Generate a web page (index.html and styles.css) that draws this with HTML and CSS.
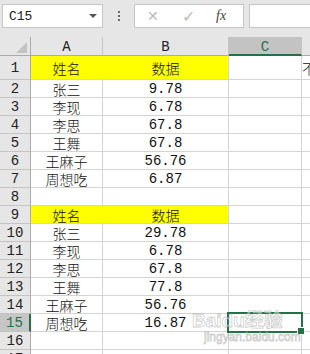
FILE: index.html
```html
<!DOCTYPE html>
<html lang="zh">
<head>
  <meta charset="UTF-8" />
  <title>Sheet</title>
  <link rel="stylesheet" href="styles.css">
</head>
<body>

  <div class="toolbar">
    <div class="name-box">
      <span>C15</span>
      <span class="caret"></span>
    </div>
    <div class="dots"><i></i><i></i><i></i></div>
    <div class="fx-buttons">
      <span class="btn-x">✕</span>
      <span class="btn-ok">✓</span>
      <span class="btn-fx">fx</span>
    </div>
    <div class="formula-input"></div>
  </div>

  <div class="sheet">
    <div class="cell corner"><span class="tri"></span></div>
    <div class="cell colhead">A</div>
    <div class="cell colhead">B</div>
    <div class="cell colhead active">C</div>
    <div class="cell colhead last"></div>

    <div class="cell rowhead tall">1</div>
    <div class="cell tall yellow first">姓名</div>
    <div class="cell tall yellow">数据</div>
    <div class="cell tall"></div>
    <div class="cell tall d-text">不</div>

    <div class="cell rowhead">2</div><div class="cell cn">张三</div><div class="cell num">9.78</div><div class="cell"></div><div class="cell"></div>
    <div class="cell rowhead">3</div><div class="cell cn">李现</div><div class="cell num">6.78</div><div class="cell"></div><div class="cell"></div>
    <div class="cell rowhead">4</div><div class="cell cn">李思</div><div class="cell num">67.8</div><div class="cell"></div><div class="cell"></div>
    <div class="cell rowhead">5</div><div class="cell cn">王舞</div><div class="cell num">67.8</div><div class="cell"></div><div class="cell"></div>
    <div class="cell rowhead">6</div><div class="cell cn">王麻子</div><div class="cell num">56.76</div><div class="cell"></div><div class="cell"></div>
    <div class="cell rowhead">7</div><div class="cell cn">周想吃</div><div class="cell num">6.87</div><div class="cell"></div><div class="cell"></div>
    <div class="cell rowhead">8</div><div class="cell"></div><div class="cell"></div><div class="cell"></div><div class="cell"></div>

    <div class="cell rowhead">9</div><div class="cell yellow first">姓名</div><div class="cell yellow">数据</div><div class="cell"></div><div class="cell"></div>
    <div class="cell rowhead">10</div><div class="cell cn">张三</div><div class="cell num">29.78</div><div class="cell"></div><div class="cell"></div>
    <div class="cell rowhead">11</div><div class="cell cn">李现</div><div class="cell num">6.78</div><div class="cell"></div><div class="cell"></div>
    <div class="cell rowhead">12</div><div class="cell cn">李思</div><div class="cell num">67.8</div><div class="cell"></div><div class="cell"></div>
    <div class="cell rowhead">13</div><div class="cell cn">王舞</div><div class="cell num">77.8</div><div class="cell"></div><div class="cell"></div>
    <div class="cell rowhead">14</div><div class="cell cn">王麻子</div><div class="cell num">56.76</div><div class="cell"></div><div class="cell"></div>
    <div class="cell rowhead active">15</div><div class="cell cn">周想吃</div><div class="cell num">16.87</div>
    <div class="cell selected"><span class="sel-box"><span class="handle"></span></span></div><div class="cell"></div>
    <div class="cell rowhead">16</div><div class="cell"></div><div class="cell"></div><div class="cell"></div><div class="cell"></div>
    <div class="cell rowhead">17</div><div class="cell"></div><div class="cell"></div><div class="cell"></div><div class="cell"></div>
  </div>

  <div class="watermark">
    <div class="wm-logo">Bai<span class="paw">du</span>经验</div>
    <div class="wm-url">jingyan.baidu.com</div>
  </div>

</body>
</html>
```

FILE: styles.css
```css
body {
  margin: 0;
  background: #fff;
  overflow: hidden;
  position: relative;
  font-family: "Liberation Mono", "Noto Sans CJK SC", monospace;
}
.toolbar {
  height: 37px;
  background: #e6e6e6;
  display: flex;
  align-items: flex-start;
  padding-top: 4px;
  box-sizing: border-box;
}
.name-box {
  width: 101px;
  height: 24px;
  margin-left: 2px;
  background: #fff;
  border: 1px solid #c6c6c6;
  box-sizing: border-box;
  display: flex;
  align-items: center;
  justify-content: space-between;
  padding: 0 5px 0 6px;
  font-size: 13px;
  color: #222;
}
.caret {
  width: 0;
  height: 0;
  border-left: 4px solid transparent;
  border-right: 4px solid transparent;
  border-top: 4px solid #555;
}
.dots {
  width: 31px;
  height: 24px;
  display: flex;
  flex-direction: column;
  align-items: center;
  justify-content: center;
  gap: 2px;
}
.dots i {
  width: 2px;
  height: 2px;
  background: #6a6a6a;
}
.fx-buttons {
  width: 110px;
  height: 24px;
  background: #fff;
  border: 1px solid #c6c6c6;
  box-sizing: border-box;
  display: flex;
  align-items: center;
  font-family: "Liberation Sans", sans-serif;
}
.btn-x {
  color: #bbb;
  font-size: 14px;
  margin-left: 12px;
}
.btn-ok {
  color: #bbb;
  font-size: 16px;
  margin-left: 23px;
}
.btn-fx {
  font-family: "Liberation Serif", serif;
  font-style: italic;
  font-size: 14px;
  color: #444;
  margin-left: 21px;
}
.formula-input {
  flex: 1;
  height: 24px;
  margin-left: 5px;
  background: #fff;
  border: 1px solid #c6c6c6;
  border-right: none;
  box-sizing: border-box;
}
.sheet {
  display: grid;
  grid-template-columns: 31px 72px 126px 73px 1fr;
  grid-auto-rows: 18px;
  grid-template-rows: 19px 24px;
}
.cell {
  box-sizing: border-box;
  border-right: 1px solid #d4d4d4;
  border-bottom: 1px solid #d4d4d4;
  display: flex;
  align-items: center;
  justify-content: center;
  font-size: 14px;
  line-height: 16px;
  color: #111;
  white-space: nowrap;
  overflow: hidden;
}
.corner {
  background: #e6e6e6;
  border-right: 1px solid #ababab;
  border-bottom: 1px solid #ababab;
  position: relative;
}
.tri {
  position: absolute;
  right: 3px;
  bottom: 2px;
  width: 0;
  height: 0;
  border-left: 11px solid transparent;
  border-bottom: 11px solid #c3c3c3;
}
.colhead {
  background: #e6e6e6;
  border-right: 1px solid #c4c4c4;
  border-bottom: 1px solid #ababab;
  color: #222;
  padding-top: 2px;
}
.colhead.last {
  border-right: none;
}
.colhead.active {
  background: #c3c3c3;
  border-bottom: 2px solid #217346;
  color: #217346;
}
.rowhead {
  background: #e6e6e6;
  border-right: 1px solid #ababab;
  border-bottom: 1px solid #c4c4c4;
  color: #222;
}
.rowhead.active {
  background: #c6c6c6;
  border-right: 2px solid #217346;
  color: #217346;
}
.cn {
  font-family: "Noto Sans CJK SC", sans-serif;
  font-weight: 300;
}
.yellow {
  background: #ffff00;
  font-family: "Noto Sans CJK SC", sans-serif;
  font-weight: 300;
}
.yellow.first {
  border-right-color: #ffff00;
}
.d-text {
  justify-content: flex-start;
  border-right: none;
  font-family: "Noto Sans CJK SC", sans-serif;
  font-weight: 300;
}
.cell:nth-child(5n) {
  border-right: none;
}
.selected {
  overflow: visible;
  position: relative;
}
.sel-box {
  position: absolute;
  left: -2px;
  top: -2px;
  right: -2px;
  bottom: -2px;
  border: 2px solid #217346;
  z-index: 2;
}
.handle {
  position: absolute;
  right: -4px;
  bottom: -4px;
  width: 6px;
  height: 6px;
  background: #217346;
  border: 1px solid #fff;
}
.watermark {
  position: absolute;
  left: 192px;
  top: 310px;
  color: rgba(255, 255, 255, 0.5);
  -webkit-text-stroke: 0.8px rgba(140, 140, 140, 0.45);
  font-family: "Liberation Sans", "Noto Sans CJK SC", sans-serif;
  pointer-events: none;
  z-index: 3;
}
.wm-logo {
  font-size: 19px;
  font-weight: bold;
  line-height: 21px;
}
.wm-url {
  font-size: 12px;
  margin-left: 12px;
  line-height: 13px;
}
```
